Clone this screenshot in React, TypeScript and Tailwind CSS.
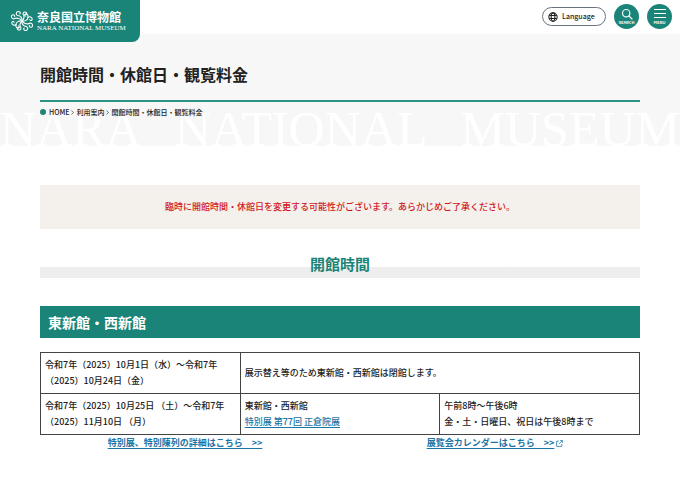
import type { ReactNode } from 'react'

type Hours = {
  period: string
  detail: ReactNode
  time?: ReactNode
}

const linkStyle = 'text-[#1b75a5] underline underline-offset-2'

const HOURS: Hours[] = [
  {
    period: '令和7年（2025）10月1日（水）～令和7年（2025）10月24日（金）',
    detail: '展示替え等のため東新館・西新館は閉館します。',
  },
  {
    period: '令和7年（2025）10月25日 （土）～令和7年（2025）11月10日 （月）',
    detail: (
      <>
        東新館・西新館<br />
        <a href="#shosoin" className={linkStyle}>特別展 第77回 正倉院展</a>
      </>
    ),
    time: (
      <>
        午前8時～午後6時<br />
        金・土・日曜日、祝日は午後8時まで
      </>
    ),
  },
]

const CRUMBS = [
  { label: 'HOME', href: '#home' },
  { label: '利用案内', href: '#guide' },
]

// One half of the crest, the other half is the same turned by 180 degrees
const SWIRLS = [
  'M12 11C10 8 6 7.500 3.500 9C1.500 8.500 .8 6.500 2 5.200C3.200 4.200 5 5 4.600 6.400',
  'M12 11C12.500 8 10.500 5.500 7.500 5.500C5.500 4.500 6 2 8 1.500C10 1.200 11 3 9.800 4',
  'M12 11C9 10.500 6 12 6 14.500C4.500 16 2 15 1.800 13C1.700 11.500 3.500 11 4.200 12.200',
  'M12 11C14 9 14.500 6 13 4C13 2.500 14.500 1.500 16 2.200C17.200 3 16.500 4.800 15.200 4.500',
  'M6 14.500C5.500 17 7 18.500 8.500 18C9.800 17.500 9.500 15.800 8.200 16',
]

function Crest() {
  return (
    <svg viewBox="0 0 24 22" className="h-[22px] w-6 shrink-0" fill="none" stroke="white" strokeWidth="1.100" strokeLinecap="round" aria-hidden="true">
      {SWIRLS.map((d) => (
        <g key={d}>
          <path d={d} />
          <path d={d} transform="rotate(180 12 11)" />
        </g>
      ))}
    </svg>
  )
}

function Header() {
  return (
    <header className="relative z-10 flex h-[34px] items-start justify-between bg-white">
      <a href="#home" className="flex h-[42px] items-center gap-[3px] rounded-br-lg bg-[#1a8478] pr-[14px] pl-[10px] text-white">
        <Crest />
        <span className="flex flex-col font-['Liberation_Serif','Noto_Sans_CJK_JP',serif]">
          <span className="text-[12px] leading-[14px] font-bold">奈良国立博物館</span>
          <span className="text-[7px] leading-[7px]">NARA NATIONAL MUSEUM</span>
        </span>
      </a>
      <div className="flex items-center gap-2 pt-1 pr-2">
        <button type="button" className="flex h-[19px] w-16 items-center gap-1 rounded-full border border-gray-500 pl-[5px] text-[7px] font-medium">
          <svg viewBox="0 0 12 12" className="size-[10px]" fill="none" stroke="currentColor" strokeWidth="1.300" aria-hidden="true">
            <circle cx="6" cy="6" r="5" />
            <ellipse cx="6" cy="6" rx="2.200" ry="5" />
            <path d="M1.400 4.200h9.200M1.400 7.800h9.200" />
          </svg>
          Language
        </button>
        <button type="button" className="flex size-[25px] flex-col items-center justify-center rounded-full bg-[#1a8478] text-[4px] leading-[5px] font-bold text-white">
          <svg viewBox="0 0 12 12" className="size-3" fill="none" stroke="currentColor" strokeWidth="1.200" strokeLinecap="round" aria-hidden="true">
            <circle cx="5.200" cy="5.200" r="3.700" />
            <path d="M8 8l3 3" />
          </svg>
          SEARCH
        </button>
        <button type="button" className="flex size-[25px] flex-col items-center justify-center rounded-full bg-[#1a8478] text-[4px] leading-[5px] font-bold text-white">
          <svg viewBox="0 0 12 12" className="size-3" stroke="currentColor" strokeWidth="1.200" aria-hidden="true">
            <path d="M0 1.500h12M0 5.500h12M0 9.500h12" />
          </svg>
          MENU
        </button>
      </div>
    </header>
  )
}

function PageTitle() {
  return (
    <div className="relative h-28 bg-[#f7f7f7] px-10 pt-7">
      {/* Watermark behind the breadcrumb */}
      <p aria-hidden="true" className="absolute inset-x-0 bottom-0 flex justify-between font-['Liberation_Serif',serif] text-[50px] leading-[34px] text-white">
        <span>NARA</span>
        <span>NATIONAL</span>
        <span>MUSEUM</span>
      </p>
      <div className="relative">
        <h1 className="border-b-2 border-[#2b9284] pb-[14px] text-[16px] leading-6 font-bold">
          開館時間・休館日・観覧料金
        </h1>
        <nav aria-label="breadcrumb" className="flex items-center pt-1 text-[7px] leading-3 font-medium">
          <span className="mr-[3px] size-[6px] rounded-full bg-[#1a8478]" />
          {CRUMBS.map((c) => (
            <span key={c.href} className="flex items-center">
              <a href={c.href}>{c.label}</a>
              <svg viewBox="0 0 4 6" className="mx-[2px] h-[5px] w-[3px]" fill="none" stroke="#555" strokeWidth="1" aria-hidden="true">
                <path d="M.5.5L3.500 3L.5 5.500" />
              </svg>
            </span>
          ))}
          <span>開館時間・休館日・観覧料金</span>
        </nav>
      </div>
    </div>
  )
}

export default function App() {
  return (
    <div className="min-h-screen bg-white font-['Noto_Sans_CJK_JP',sans-serif] text-[#222]">
      <Header />
      <PageTitle />

      <main className="px-10 pt-[39px] text-[9px] leading-4 font-medium">
        <p className="bg-[#f4f1ec] py-[14px] text-center text-[#d0181f]">
          臨時に開館時間・休館日を変更する可能性がございます。あらかじめご了承ください。
        </p>

        <h2 className="mt-[23px] bg-linear-to-t from-[#eeeeee] from-[11px] to-transparent to-[11px] pb-[2px] text-center text-[15px] leading-6 font-bold text-[#1a8478]">
          開館時間
        </h2>

        <h3 className="mt-7 bg-[#1a8478] px-2 text-[14px] leading-8 font-bold text-white">
          東新館・西新館
        </h3>

        <table className="mt-[14px] w-full table-fixed border-collapse">
          <tbody>
            {HOURS.map((row) => (
              <tr key={row.period}>
                <td className="border border-[#444] px-1 py-1">{row.period}</td>
                <td className="border border-[#444] px-1 py-1" colSpan={row.time ? 1 : 2}>{row.detail}</td>
                {row.time && <td className="border border-[#444] px-1 py-1">{row.time}</td>}
              </tr>
            ))}
          </tbody>
        </table>

        <div className="grid grid-cols-2 gap-5 text-center font-bold">
          <p>
            <a href="#exhibitions" className={linkStyle}>特別展、特別陳列の詳細はこちら　&gt;&gt;</a>
          </p>
          <p>
            <a href="#calendar" className={linkStyle}>展覧会カレンダーはこちら　&gt;&gt;</a>
            <svg viewBox="0 0 12 12" className="ml-[2px] inline size-[7px]" fill="none" stroke="#1b75a5" strokeWidth="1.300" aria-hidden="true">
              <path d="M5 2H1v9h9V7M7 1h4v4M11 1L5 7" />
            </svg>
          </p>
        </div>
      </main>
    </div>
  )
}
